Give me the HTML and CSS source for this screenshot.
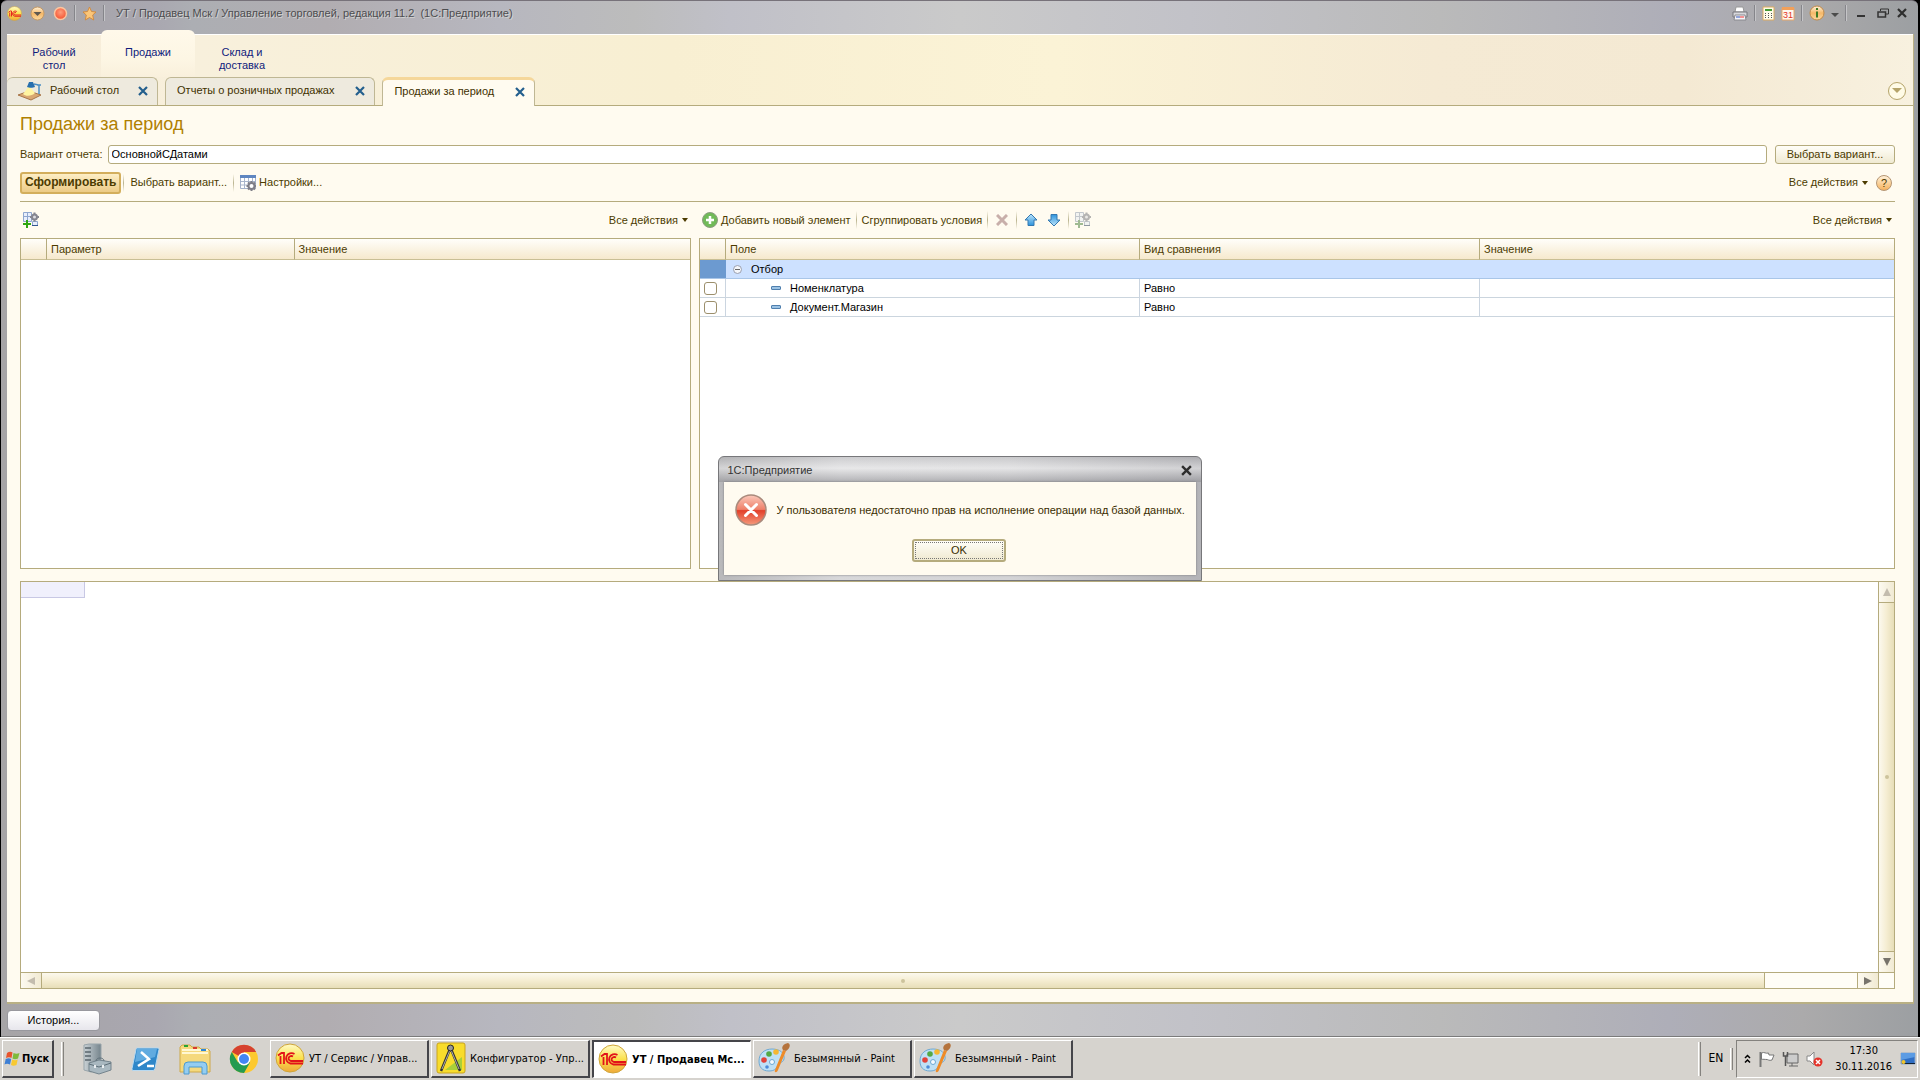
FILE: index.html
```html
<!DOCTYPE html>
<html lang="ru">
<head>
<meta charset="utf-8">
<title>Продажи за период</title>
<link rel="stylesheet" href="styles.css">
</head>
<body>
<svg class="defs" aria-hidden="true">
  <defs>
    <linearGradient id="gOrange" x1="0" y1="0" x2="0" y2="1"><stop offset="0" stop-color="#fff3dc"/><stop offset=".5" stop-color="#f6b868"/><stop offset="1" stop-color="#fbd9a0"/></linearGradient>
    <radialGradient id="gRed" cx=".5" cy=".4" r=".6"><stop offset="0" stop-color="#ff9d7c"/><stop offset="1" stop-color="#f4512f"/></radialGradient>
    <linearGradient id="gYellow" x1="0" y1="0" x2="0" y2="1"><stop offset="0" stop-color="#fffbc8"/><stop offset=".5" stop-color="#fbe14e"/><stop offset="1" stop-color="#efa93a"/></linearGradient>
    <linearGradient id="gBlue" x1="0" y1="0" x2="0" y2="1"><stop offset="0" stop-color="#bfe6fb"/><stop offset="1" stop-color="#2d93dc"/></linearGradient>
    <linearGradient id="gError" x1="0" y1="0" x2="0" y2="1"><stop offset="0" stop-color="#fbc9bb"/><stop offset=".48" stop-color="#ee8069"/><stop offset=".52" stop-color="#e2402a"/><stop offset="1" stop-color="#f59a7c"/></linearGradient>
    <linearGradient id="gSteel" x1="0" y1="0" x2="1" y2="0"><stop offset="0" stop-color="#c9d1d5"/><stop offset="1" stop-color="#75848c"/></linearGradient>
    <symbol id="logo1c" viewBox="0 0 30 30">
      <circle cx="15" cy="15" r="14" fill="url(#gYellow)" stroke="#cfa53a"/>
      <path d="M3 12.500l3.500-2.500H9v11M5.500 13v8M19.500 11a5.500 5.200 0 1 0-4 9.500H28M18 13.500a2.800 2.500 0 1 0-2 4.500H28" fill="none" stroke="#e2131a" stroke-width="1.800"/>
    </symbol>
    <symbol id="paint" viewBox="0 0 32 32">
      <path d="M14 7c8 0 13 4 12 10-1 4-5 3-6 6s-3 6-9 6C4 29 1 25 1 19 1 11 7 7 14 7z" fill="#bfe0f5" stroke="#6ea9d3"/>
      <circle cx="6" cy="18" r="2.800" fill="#e1433a"/><circle cx="11" cy="12" r="2.800" fill="#53a845"/><circle cx="18" cy="10" r="2.800" fill="#f5b732"/><circle cx="14" cy="20" r="2.500" fill="#f5faff" stroke="#6ea9d3"/><circle cx="9" cy="25" r="1.800" fill="#4c8bd8"/>
      <path d="M25 8l3 1-8 19c-1 3-4 3-3 0z" fill="#ee8b28"/><path d="M25 8c-2-3 0-6 5-7 3 1 2 6-2 8z" fill="#b5733c"/>
    </symbol>
    <symbol id="cross" viewBox="0 0 10 10"><path d="M1 1l8 8M9 1L1 9" fill="none" stroke="currentColor" stroke-width="2.200"/></symbol>
    <symbol id="tableGear" viewBox="0 0 16 16">
      <path d="M.5.5h15v13H.5z" fill="#fff" stroke="#a3b1ca"/><path d="M0 0h16v3H0z" fill="#5f86c0"/><path d="M4.500 3v10M8.500 3v10M12.500 3v3M1 6.500h14M1 10h7" stroke="#a9b6cc" fill="none"/>
      <circle cx="11.500" cy="11" r="3" fill="#fff" stroke="#7f7f88" stroke-width="2"/><path d="M11.500 6v10M6.500 11h10" stroke="#7f7f88" stroke-width="2" stroke-dasharray="2 6"/><path d="M8 7.500l7 7M15 7.500l-7 7" stroke="#7f7f88" stroke-width="2" stroke-dasharray="2 6"/>
    </symbol>
    <symbol id="addGear" viewBox="0 0 16 16">
      <path d="M.5.5h8v9h-8zM9.500 9.500h5v4h-5z" fill="#e8eefc" stroke="#8ea6cf"/><path d="M4.500 1v8M1 4.500h7" stroke="#8ea6cf"/><path d="M9 13.500h6" stroke="#34578f"/>
      <circle cx="11.500" cy="5" r="2.500" fill="#dcdce2" stroke="#85858f" stroke-width="2"/><path d="M11.500.5v9M7 5h9" stroke="#85858f" stroke-width="2" stroke-dasharray="1.500 6"/>
      <path d="M4 8v8M0 12h8" stroke="#2fa612" stroke-width="2"/>
    </symbol>
    <symbol id="arrowUp" viewBox="0 0 14 14"><path d="M7 1l6 6H10v5.500H4V7H1z" fill="url(#gBlue)" stroke="#3478b0"/></symbol>
  </defs>
</svg>

<div class="window">
  <header class="titlebar">
    <button class="icon-btn round" aria-label="Меню"><svg width="15" height="15"><use href="#logo1c"/></svg></button>
    <button class="icon-btn round" aria-label="Список функций"><svg width="15" height="15" viewBox="0 0 15 15"><circle cx="7.500" cy="7.500" r="6.500" fill="url(#gOrange)" stroke="#c59a66"/><path d="M3.500 6h8l-4 4z" fill="#5f5950"/></svg></button>
    <button class="icon-btn" aria-label="Стоп"><svg width="15" height="15" viewBox="0 0 15 15"><circle cx="7.500" cy="7.500" r="6" fill="url(#gRed)" stroke="#fbc6a0" stroke-width="1.500"/></svg></button>
    <i class="tsep"></i>
    <button class="icon-btn" aria-label="Избранное"><svg width="15" height="15" viewBox="0 0 15 15"><path d="M7.500 1l2 4.500 4.500.5-3.300 3 1 5-4.200-2.500L3.300 14l1-5L1 6l4.500-.5z" fill="#fbc679" stroke="#d18c42"/></svg></button>
    <i class="tsep"></i>
    <h1 class="caption">УТ / Продавец Мск / Управление торговлей, редакция 11.2&nbsp; (1С:Предприятие)</h1>
    <button class="icon-btn" aria-label="Печать"><svg width="16" height="15" viewBox="0 0 16 15"><path d="M4 1h7l1 5H3z" fill="#fff" stroke="#999"/><path d="M1 6h14v5H1z" fill="#d8d8dc" stroke="#77777d"/><path d="M3 9h10l1 5H2z" fill="#f4f4f8" stroke="#8a8a90"/><path d="M4 11h4" stroke="#35b"/><path d="M8 11h4" stroke="#e33"/></svg></button>
    <i class="tsep"></i>
    <button class="icon-btn" aria-label="Калькулятор"><svg width="13" height="15" viewBox="0 0 13 15"><path d="M1 1h11v13H1z" fill="#fffce9" stroke="#ddab62"/><path d="M3 3h7v2H3z" fill="#459b35"/><path d="M3 7.500h7M3 9.500h7M3 11.500h7" stroke="#555" stroke-dasharray="1 2"/></svg></button>
    <button class="icon-btn" aria-label="Календарь"><svg width="14" height="15" viewBox="0 0 14 15"><path d="M1 2h12v12H1z" fill="#fff8ef" stroke="#e7a86a"/><path d="M1 1h12v3H1z" fill="#f2a05a"/><text x="7" y="12" text-anchor="middle" class="cal">31</text></svg></button>
    <i class="tsep"></i>
    <button class="icon-btn" aria-label="Информация"><svg width="16" height="16" viewBox="0 0 16 16"><circle cx="8" cy="8" r="7" fill="url(#gOrange)" stroke="#c08a4a"/><path d="M8 3v2M8 6.500v6" stroke="#3d7a26" stroke-width="2"/></svg></button>
    <button class="icon-btn" aria-label="Ещё"><svg width="8" height="10" viewBox="0 0 8 10"><path d="M0 5h8L4 9z" fill="#4b4b4b"/></svg></button>
    <i class="tsep"></i>
    <button class="icon-btn ctl" aria-label="Свернуть"><svg width="8" height="10" viewBox="0 0 8 10"><path d="M0 8h8" stroke="#333" stroke-width="2"/></svg></button>
    <button class="icon-btn ctl" aria-label="Развернуть"><svg width="12" height="10" viewBox="0 0 12 10"><path d="M3.500 3V1h8v5H9" fill="none" stroke="#333"/><path d="M1 4h7.500v5H1z" fill="none" stroke="#333" stroke-width="1.500"/></svg></button>
    <button class="icon-btn dark" aria-label="Закрыть"><svg width="10" height="10"><use href="#cross"/></svg></button>
  </header>

  <div class="client">
    <div class="band">
      <nav class="sections">
        <a href="#">Рабочий<br>стол</a>
        <a href="#" class="on">Продажи</a>
        <a href="#">Склад и<br>доставка</a>
      </nav>
      <div class="tabs">
        <div class="tab first"><svg width="26" height="20" viewBox="0 0 26 20"><path d="M1 14l11-4 12 4-10 5z" fill="#d9a872" stroke="#a8764a"/><path d="M12 5L6 13c3 3 9 2 12-1z" fill="#fff4a0"/><path d="M10 6l2-5h4l2 5c-2 1-6 1-8 0z" fill="#276fae"/><path d="M17 3l5 1v9M20 4h4" fill="none" stroke="#4b8fc4" stroke-width="1.500"/></svg><a href="#">Рабочий стол</a><button class="close" aria-label="Закрыть"><svg width="10" height="10"><use href="#cross"/></svg></button></div>
        <div class="tab"><a href="#">Отчеты о розничных продажах</a><button class="close" aria-label="Закрыть"><svg width="10" height="10"><use href="#cross"/></svg></button></div>
        <div class="tab on"><a href="#">Продажи за период</a><button class="close" aria-label="Закрыть"><svg width="10" height="10"><use href="#cross"/></svg></button></div>
        <button class="collapse" aria-label="Список вкладок"><svg width="10" height="6" viewBox="0 0 10 6"><path d="M0 0h10L5 5z" fill="#b5a46a"/></svg></button>
      </div>
    </div>

    <main class="page">
      <h2>Продажи за период</h2>
      <div class="variant">
        <label for="variant">Вариант отчета:</label>
        <input id="variant" type="text" value="ОсновнойСДатами">
        <button class="btn wide">Выбрать вариант...</button>
      </div>
      <div class="toolbar main-tools">
        <button class="btn primary">Сформировать</button>
        <i class="sep"></i>
        <button class="flat">Выбрать вариант...</button>
        <i class="sep"></i>
        <button class="flat"><svg width="16" height="16"><use href="#tableGear"/></svg>Настройки...</button>
        <button class="flat all">Все действия<i class="caret"></i></button>
        <button class="help" aria-label="Справка">?</button>
      </div>

      <div class="split">
        <section class="pane">
          <div class="toolbar">
            <button class="flat" aria-label="Добавить"><svg width="16" height="16"><use href="#addGear"/></svg></button>
            <button class="flat all">Все действия<i class="caret"></i></button>
          </div>
          <div class="grid-box">
            <table>
              <colgroup><col class="c-mark"><col class="c-param"><col></colgroup>
              <thead><tr><th></th><th>Параметр</th><th>Значение</th></tr></thead>
            </table>
          </div>
        </section>
        <section class="pane">
          <div class="toolbar">
            <button class="flat add"><svg width="16" height="16" viewBox="0 0 16 16"><circle cx="8" cy="8" r="7.500" fill="#71ba58" stroke="#8d9d82"/><path d="M8 4v8M4 8h8" stroke="#fff" stroke-width="2.500"/></svg>Добавить новый элемент</button>
            <i class="sep"></i>
            <button class="flat">Сгруппировать условия</button>
            <i class="sep"></i>
            <button class="flat ico off" aria-label="Удалить"><svg width="12" height="12" viewBox="0 0 12 12"><path d="M1 1l10 10M11 1L1 11" stroke="#a57d7d" stroke-width="3"/></svg></button>
            <i class="sep"></i>
            <button class="flat ico" aria-label="Вверх"><svg width="14" height="14"><use href="#arrowUp"/></svg></button>
            <button class="flat ico" aria-label="Вниз"><svg class="flip" width="14" height="14"><use href="#arrowUp"/></svg></button>
            <i class="sep"></i>
            <button class="flat ico off gray" aria-label="Настройка элемента"><svg width="16" height="16"><use href="#addGear"/></svg></button>
            <button class="flat all">Все действия<i class="caret"></i></button>
          </div>
          <div class="grid-box">
            <table>
              <colgroup><col class="c-mark"><col class="c-field"><col class="c-cmp"><col></colgroup>
              <thead><tr><th></th><th>Поле</th><th>Вид сравнения</th><th>Значение</th></tr></thead>
              <tbody>
                <tr class="sel"><td class="cur"></td><td colspan="3"><svg class="fold" width="9" height="9" viewBox="0 0 9 9"><circle cx="4.500" cy="4.500" r="4" fill="#f5f7fb" stroke="#9a9fae"/><path d="M2 4.500h5" stroke="#666"/></svg>Отбор</td></tr>
                <tr><td class="tick"><input type="checkbox" aria-label="Номенклатура"></td><td class="leaf"><i class="dash"></i>Номенклатура</td><td>Равно</td><td></td></tr>
                <tr><td class="tick"><input type="checkbox" aria-label="Документ.Магазин"></td><td class="leaf"><i class="dash"></i>Документ.Магазин</td><td>Равно</td><td></td></tr>
              </tbody>
            </table>
          </div>
        </section>
      </div>

      <section class="sheet">
        <div class="cells"><div class="cell"></div></div>
        <div class="vbar"><span class="arr"><svg width="8" height="8" viewBox="0 0 8 8"><path d="M4 0l4 8H0z" fill="#c3bcae"/></svg></span><span class="thumb"><i class="grip"></i></span><span class="arr"><svg width="8" height="8" viewBox="0 0 8 8"><path d="M4 8l4-8H0z" fill="#77736b"/></svg></span></div>
        <div class="hbar"><span class="arr"><svg width="8" height="8" viewBox="0 0 8 8"><path d="M0 4l8-4v8z" fill="#c3bcae"/></svg></span><span class="thumb"><i class="grip"></i></span><span class="rest"></span><span class="arr"><svg width="8" height="8" viewBox="0 0 8 8"><path d="M8 4L0 0v8z" fill="#77736b"/></svg></span></div>
        <div class="corner"></div>
      </section>
    </main>
  </div>

  <footer class="status"><button class="history">История...</button></footer>

  <dialog open class="msg" aria-labelledby="msgTitle">
    <div class="msg-head"><span id="msgTitle">1С:Предприятие</span><button class="icon-btn dark" aria-label="Закрыть"><svg width="11" height="11"><use href="#cross"/></svg></button></div>
    <div class="msg-body">
      <div class="msg-row"><svg width="32" height="32" viewBox="0 0 32 32"><circle cx="16" cy="16" r="15" fill="url(#gError)" stroke="#a98a7c" stroke-width="1.500"/><path d="M10.500 10.500l11 11M21.500 10.500l-11 11" stroke="#fff" stroke-width="3" stroke-linecap="round"/></svg><p>У пользователя недостаточно прав на исполнение операции над базой данных.</p></div>
      <button class="btn ok">OK</button>
    </div>
  </dialog>
</div>

<footer class="taskbar">
  <button class="start"><svg width="17" height="17" viewBox="0 0 17 17"><path d="M3 3c2-1.500 4-1.500 5.500-.5L7.500 8C6 7 4 7 2 8z" fill="#e8542d"/><path d="M9.500 3c2 1 4 1 6 0l-1.500 5.500c-2 1-4 1-5.500 0z" fill="#7fba3a"/><path d="M1.700 9c2-1 4-1 5.500 0L6 14.500c-2-1-4-1-5.500 0z" fill="#3f7fd4"/><path d="M8.200 9.500c2 1 4 1 5.500 0L12.500 15c-2 1-4 1-5.500 0z" fill="#f8c932"/></svg>Пуск</button>
  <i class="groove"></i>
  <div class="quick">
    <button class="icon-btn" aria-label="Диспетчер сервера"><svg width="32" height="32" viewBox="0 0 32 32"><path d="M3 2l5-1h12v24l-10 4-7-2z" fill="url(#gSteel)" stroke="#98a4aa"/><path d="M4 5h6M4 9h6M4 13h6M4 17h6" stroke="#59666e" stroke-width="1.500"/><path d="M8 20l10-3 12 2v8l-12 4-10-3z" fill="#a9b8c0" stroke="#74848d"/><path d="M8 21l10 3 12-4M15 18c0-4 8-4 8 0" fill="none" stroke="#5e6f79"/><path d="M14 22v3M22 22v3" stroke="#e8edf0" stroke-width="2"/></svg></button>
    <button class="icon-btn" aria-label="PowerShell"><svg width="30" height="30" viewBox="0 0 30 30"><path d="M6 4h21q1.500 0 1 1.500l-4 19q-.5 2-2 2H2q-1.500 0-1-2l4-19Q5.300 4 6 4z" fill="#2f87c9" stroke="#b8d9f0"/><path d="M6 5h20l-2 8-20 5z" fill="#61abe0"/><path d="M10 8l8 7-11 7M16 22h7" fill="none" stroke="#fff" stroke-width="2.500"/></svg></button>
    <button class="icon-btn" aria-label="Проводник"><svg width="32" height="32" viewBox="0 0 32 32"><path d="M1 29V4l2-2h8l2 2h7l2 2h7l2 2v21z" fill="#f5d97d" stroke="#cda84b"/><path d="M3 7h26M3 10h26" stroke="#fff7d2" stroke-width="2"/><path d="M5 3h4" stroke="#28a532" stroke-width="2"/><path d="M14 5h4" stroke="#d93a30" stroke-width="2"/><path d="M22 7h5" stroke="#2c86d6" stroke-width="2"/><path d="M5 31V23q0-4 4-4h15q4 0 4 4v8h-5v-7H10v7z" fill="#94cdf1" stroke="#4c9bd0"/></svg></button>
    <button class="icon-btn" aria-label="Chrome"><svg width="30" height="30" viewBox="0 0 30 30"><circle cx="15" cy="15" r="14" fill="#fdc92f"/><path d="M15 15L2.800 8A14 14 0 0 1 27.200 8H15z" fill="#d6412f"/><path d="M2.800 8A14 14 0 0 0 15 29l6-10.500L15 15 9 18.500z" fill="#259b50"/><circle cx="15" cy="15" r="6.500" fill="#fff"/><circle cx="15" cy="15" r="5" fill="#4285f4"/></svg></button>
  </div>
  <div class="tasks">
    <button class="task"><svg width="30" height="30"><use href="#logo1c"/></svg>УТ / Сервис / Управ...</button>
    <button class="task"><svg width="30" height="32" viewBox="0 0 30 32"><rect x="1" y="1" width="28" height="30" rx="2" fill="#f8dc2c" stroke="#c9a31c"/><path d="M9 28l17-13v13z" fill="#a9cf3a"/><path d="M14 7L5 29M15 7l9 22" stroke="#333" stroke-width="2.500"/><path d="M14 8L6 27M15 8l8 19" stroke="#aaa"/><circle cx="14.500" cy="6" r="3" fill="#999" stroke="#222"/></svg>Конфигуратор - Упр...</button>
    <button class="task on"><svg width="30" height="30"><use href="#logo1c"/></svg>УТ / Продавец Мс...</button>
    <button class="task"><svg width="32" height="32"><use href="#paint"/></svg>Безымянный - Paint</button>
    <button class="task"><svg width="32" height="32"><use href="#paint"/></svg>Безымянный - Paint</button>
  </div>
  <i class="groove"></i>
  <button class="lang">EN</button>
  <i class="groove small"></i>
  <div class="tray">
    <svg width="7" height="10" viewBox="0 0 7 10"><path d="M1 4l2.500-2.500L6 4M1 8.500L3.500 6 6 8.500" fill="none" stroke="#000" stroke-width="1.500"/></svg>
    <svg width="17" height="16" viewBox="0 0 17 16"><path d="M2.500 1v15" stroke="#777" stroke-width="2"/><path d="M3.500 2c3-1.500 4 1 7 0l.5 2h5l-2 5c-3 1-4-.5-5-.5-2 0-4-.5-5.500 0z" fill="#fff" stroke="#777"/></svg>
    <svg width="17" height="16" viewBox="0 0 17 16"><path d="M5 3h11v9H5zM7 15h9" fill="#ccc" stroke="#666"/><path d="M1.500 1v4h4V1M3.500 5v10" fill="none" stroke="#555" stroke-width="1.500"/><path d="M10 12v3" stroke="#666"/></svg>
    <svg width="17" height="16" viewBox="0 0 17 16"><path d="M1 5h3l4-4v13l-4-4H1z" fill="#fff" stroke="#888"/><circle cx="12" cy="11" r="4.500" fill="#e5332a"/><path d="M10 9l4 4M14 9l-4 4" stroke="#fff" stroke-width="1.500"/></svg>
    <time class="clock">17:30<br>30.11.2016</time>
    <svg width="16" height="13" viewBox="0 0 16 13"><path d="M1 1h14v11H1z" fill="#2f6fc5" stroke="#8fa9c9"/><path d="M1 1h14v4L1 8z" fill="#5c9ce4"/><path d="M2 11.500h13" stroke="#123"/><circle cx="3.500" cy="10" r="2" fill="#f2c52c"/></svg>
  </div>
</footer>
</body>
</html>
```
FILE: styles.css
```css
* { box-sizing: border-box; }
html, body { height: 100%; }
body {
  margin: 0;
  display: flex;
  flex-direction: column;
  background: #000;
  font: 11px/13px "Liberation Sans", Arial, sans-serif;
  color: #4c3b00;
}
button, input { font: inherit; color: inherit; }
button { padding: 0; border: 0; background: none; }
a { color: inherit; text-decoration: none; }
h1, h2, p { margin: 0; font-weight: normal; }
svg { display: block; flex: none; }
.defs { position: absolute; width: 0; height: 0; }

/* application window */
.window {
  position: relative;
  flex: 1;
  min-height: 0;
  display: flex;
  flex-direction: column;
  margin: 0 2px 0 1px;
  padding: 0 4px 0 6px;
  border-top: 1px solid #77727a;
  border-bottom: 1px solid #7b7b7b;
  border-radius: 6px 6px 0 0;
  background: linear-gradient(90deg, #a6a4a6 0, #a9a7b0 8%, #acaeb3 10%, #b1adb1 17%, #b7b7bf 26%, #bcbcbc 33%, #c0c0c8 38%, #cacaca 50%, #c2c2c8 62%, #bababa 75%, #aeaeb8 87%, #abaaab 94%, #9c9fa2 100%);
}
.titlebar {
  display: flex;
  align-items: center;
  gap: 6px;
  height: 33px;
  padding: 0 7px 9px 0;
}
.icon-btn { display: flex; align-items: center; justify-content: center; }
.titlebar .round { margin-right: 2px; }
.titlebar .ctl { min-width: 16px; }
.tsep { width: 2px; height: 16px; border-left: 1px solid #85858a; border-right: 1px solid #c5c5c8; }
.caption { flex: 1; padding-left: 5px; font-size: 11px; color: #4d4d50; text-shadow: 1px 1px 0 #d2d2d2; }
.cal { font: 9px "Liberation Sans", sans-serif; fill: #e2331f; }
.dark { color: #2e2e2e; }

.client {
  flex: 1;
  min-height: 0;
  display: flex;
  flex-direction: column;
  border-right: 1px solid #b9b084;
  border-bottom: 2px solid #b9b084;
  background: #fffbf0;
}
.band {
  border-top: 1px solid #fff;
  background: linear-gradient(90deg, #f7ecd8 0, #f8f0dc 10%, #f8efd2 35%, #fbf3d6 55%, #f5ead4 75%, #f4e9d3 88%, #f8f1df 100%);
}
.sections { display: flex; height: 42px; color: #101c7c; text-align: center; }
.sections a { width: 94px; padding-top: 11px; }
.sections .on {
  margin-top: -5px;
  padding-top: 16px;
  border-radius: 6px 6px 0 0;
  background: linear-gradient(#fff9ea, #fdf6e4 60%, #f9f0dc);
}
.tabs { display: flex; align-items: stretch; gap: 7px; height: 29px; padding-right: 7px; border-bottom: 1px solid #b5ab7d; }
.tab {
  display: flex;
  align-items: center;
  gap: 21px;
  padding: 0 9px 2px 11px;
  border: 1px solid #bfb794;
  border-bottom: 0;
  border-radius: 6px 6px 0 0;
  background: #eeeade;
  color: #3f3100;
}
.tab.first { gap: 7px; padding-left: 10px; border-left: 0; }
.tab.first .close { margin-left: 12px; }
.tab.on { margin-bottom: -1px; border-top: 3px solid #f5d79a; padding-bottom: 3px; background: #fffbf0; }
.close { color: #235f8d; }
.collapse {
  align-self: center;
  display: flex;
  align-items: center;
  justify-content: center;
  width: 18px;
  height: 18px;
  margin-left: auto;
  border: 1px solid #b5a46a;
  border-radius: 50%;
  background: #fffbe6;
}

/* report page */
.page { flex: 1; min-height: 0; display: flex; flex-direction: column; padding: 7px 18px 13px 13px; }
h2 { height: 32px; font-size: 18px; line-height: 23px; color: #b08000; }
.variant { display: flex; align-items: stretch; gap: 5px; height: 19px; }
.variant label { line-height: 19px; }
.variant input { flex: 1; min-width: 0; padding: 0 3px; border: 1px solid #b5ab7d; border-radius: 3px; background: #fff; color: #000; }
.btn { border: 1px solid #b5ab7d; border-radius: 3px; background: linear-gradient(#fffef8, #f0ead2); }
.wide { width: 120px; margin-left: 3px; }
.toolbar { display: flex; align-items: center; gap: 6px; height: 36px; }
.main-tools { height: 38px; border-bottom: 1px solid #b5ab7d; }
.primary { height: 22px; margin-right: -4px; padding: 0 3px; border: 2px solid #d3ae5c; background: linear-gradient(#fdeec5, #eccb86); font-size: 12px; font-weight: bold; }
.sep { width: 1px; height: 18px; background: linear-gradient(#fffbf0, #bab48f, #fffbf0); }
.flat { display: flex; align-items: center; gap: 3px; white-space: nowrap; }
.all { margin-left: auto; gap: 4px; }
.caret { border: 3px solid transparent; border-top: 4px solid #4c3b00; border-bottom: 0; }
.help { width: 16px; height: 16px; margin: 0 3px 0 2px; border: 1px solid #b59572; border-radius: 50%; background: linear-gradient(#fff1d9, #f6b35f); line-height: 14px; }
.ico { min-width: 18px; justify-content: center; }
.off { opacity: .6; }
.gray { filter: saturate(.4); }
.flip { transform: rotate(180deg); }

.split { flex: 368; min-height: 0; display: grid; grid-template-columns: 671fr 1196fr; gap: 8px; }
.pane { display: flex; flex-direction: column; min-width: 0; }
.pane .toolbar { padding: 0 3px; gap: 5px; }
.grid-box { flex: 1; border: 1px solid #b5ab7d; background: #fff; }
table { width: 100%; border-collapse: separate; border-spacing: 0; table-layout: fixed; }
.c-mark { width: 26px; }
.c-param { width: 37%; }
.c-field { width: 414px; }
.c-cmp { width: 340px; }
th { height: 21px; padding: 0 4px; border-right: 1px solid #b5ab7d; border-bottom: 1px solid #c9bf95; background: linear-gradient(#fffefa, #f6e9cd); font-weight: normal; text-align: left; }
th:last-child, td:last-child { border-right: 0; }
td { height: 19px; padding: 0 4px; border-right: 1px solid #cbd5e0; border-bottom: 1px solid #cbd5de; color: #000; }
.sel td { background: #cde1ff; border-color: #a9c6e8; }
.sel .cur { background: #6c9ad0; border-right: 0; }
.fold { float: left; margin: 2px 9px 0 3px; }
.tick { padding: 0 4px; }
.tick input { appearance: none; display: block; width: 13px; height: 13px; margin: 0; border: 1px solid #9c8f6c; border-radius: 3px; background: #fff; }
.leaf { padding-left: 45px; }
.dash { display: inline-block; width: 10px; height: 4px; margin-right: 9px; border: 1px solid #4f7fae; border-radius: 1px; background: #9cc3e4; vertical-align: 2px; }

.sheet {
  flex: 408;
  min-height: 0;
  display: grid;
  grid-template: 1fr 16px / 1fr 16px;
  margin-top: 12px;
  border: 1px solid #b5ab7d;
  background: #fff;
}
.cell { width: 64px; height: 16px; border: 1px solid #c8c8e4; border-width: 0 1px 1px 0; background: #f0f0fc; }
.vbar, .hbar { display: flex; background: #fffdf6; }
.vbar { flex-direction: column; border-left: 1px solid #b5ab7d; }
.hbar { border-top: 1px solid #b5ab7d; }
.corner { border: 1px solid #b5ab7d; border-width: 1px 0 0 1px; background: #fffdf6; }
.arr { display: flex; flex: 0 0 20px; align-items: center; justify-content: center; background: linear-gradient(90deg, #fdfaf0, #f1ead3); }
.thumb { display: flex; flex: 1; align-items: center; justify-content: center; }
.vbar .thumb { border: 1px solid #b5ab7d; border-width: 1px 0; background: linear-gradient(90deg, #fcf9ee, #f5edd2 50%, #e7deb8); }
.hbar .thumb { border: 1px solid #b5ab7d; border-width: 0 1px; background: linear-gradient(#fcf9ee, #f5edd2 50%, #e7deb8); }
.rest { flex: 0 0 5%; border-right: 1px solid #b5ab7d; }
.grip { width: 4px; height: 4px; border-radius: 50%; background: #cdc39c; }

.status { display: flex; align-items: center; height: 32px; }
.history { width: 93px; height: 21px; border: 1px solid #98989e; border-radius: 4px; background: linear-gradient(#fff, #e7e6ec); color: #000; }

/* message box over the window */
.msg {
  position: absolute;
  top: 455px;
  left: 50%;
  width: 484px;
  margin: 0;
  padding: 0 5px 5px;
  transform: translateX(-50%);
  border: 1px solid #77777a;
  border-radius: 6px 6px 0 0;
  background: linear-gradient(90deg, #b9b9bb, #d8d8da 25%, #d4d4d6 60%, #b4b4b8);
  color: #3a2d00;
}
.msg-head { display: flex; align-items: center; justify-content: space-between; height: 25px; margin: 0 -5px; padding: 2px 9px 0; border-radius: 5px 5px 0 0; background: linear-gradient(rgba(110, 110, 115, .1), rgba(255, 255, 255, .4) 45%, rgba(130, 130, 135, .45)); color: #333; }
.msg-body { display: flex; flex-direction: column; align-items: center; gap: 13px; padding: 12px 12px 13px 11px; background: #fffbf0; box-shadow: 0 0 2px #77777a; }
.msg-row { display: flex; align-items: center; gap: 10px; width: 100%; white-space: nowrap; }
.ok { width: 94px; height: 23px; border-width: 2px; outline: 1px dotted #777; outline-offset: -4px; }

/* desktop taskbar */
.taskbar {
  display: flex;
  align-items: center;
  gap: 7px;
  height: 43px;
  padding: 1px 2px 2px;
  border-top: 1px solid #fff;
  background: #d6d3ce;
  color: #000;
  font-family: "DejaVu Sans Condensed", "DejaVu Sans", sans-serif;
}
.start, .task { border: 1px solid #fff; border-right: 2px solid #45454a; border-bottom: 2px solid #45454a; height: 38px; }
.start { display: flex; align-items: center; gap: 1px; width: 52px; padding: 0 1px; font-weight: bold; }
.groove { width: 3px; height: 34px; border-left: 1px solid #fff; border-right: 1px solid #84827e; }
.small { height: 22px; margin-right: -4px; }
.quick { display: flex; flex: none; align-items: center; gap: 18px; padding: 0 4px 0 10px; }
.tasks { display: flex; flex: 1; gap: 2px; min-width: 0; }
.task { display: flex; align-items: center; gap: 4px; width: 159px; padding: 0 4px; white-space: nowrap; overflow: hidden; }
.task.on { border: 1px solid #fff; border-top: 2px solid #45454a; border-left: 2px solid #45454a; background: #fff; font-weight: bold; }
.lang { font-size: 12px; }
.tray { display: flex; align-items: center; gap: 7px; height: 38px; padding: 0 1px 0 7px; border: 1px solid #84827e; border-color: #84827e #fff #fff #84827e; }
.clock { padding: 0 1px 0 5px; line-height: 16px; text-align: center; }
```
